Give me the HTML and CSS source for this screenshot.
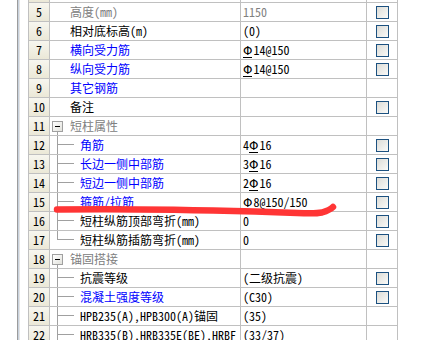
FILE: index.html
```html
<!DOCTYPE html>
<html lang="zh-CN">

<head>
    <meta charset="UTF-8">
    <title>短柱属性</title>
    <link rel="stylesheet" href="styles.css">
</head>

<body>
    <div class="sheet">
        <div class="gutter"></div>
        <div class="grid">
            <div class="row"><div class="num"></div><div class="name lv1"></div><div class="val"></div><div class="chk"><span class="box"></span></div></div>
            <div class="row"><div class="num">5</div><div class="name lv1 gray">高度(mm)</div><div class="val gray">1150</div><div class="chk"><span class="box"></span></div></div>
            <div class="row"><div class="num">6</div><div class="name lv1">相对底标高(m)</div><div class="val">(0)</div><div class="chk"><span class="box"></span></div></div>
            <div class="row"><div class="num">7</div><div class="name lv1 blue">横向受力筋</div><div class="val"><span class="rb">Φ</span>14@150</div><div class="chk"><span class="box"></span></div></div>
            <div class="row"><div class="num">8</div><div class="name lv1 blue">纵向受力筋</div><div class="val"><span class="rb">Φ</span>14@150</div><div class="chk"><span class="box"></span></div></div>
            <div class="row"><div class="num">9</div><div class="name lv1 blue">其它钢筋</div><div class="val"></div><div class="chk"></div></div>
            <div class="row"><div class="num">10</div><div class="name lv1">备注</div><div class="val"></div><div class="chk"><span class="box"></span></div></div>
            <div class="row"><div class="num">11</div><div class="name group gray"><span class="exp"></span>短柱属性</div><div class="val"></div><div class="chk"></div></div>
            <div class="row"><div class="num">12</div><div class="name child blue">角筋</div><div class="val">4<span class="rb">Φ</span>16</div><div class="chk"><span class="box"></span></div></div>
            <div class="row"><div class="num">13</div><div class="name child blue">长边一侧中部筋</div><div class="val">3<span class="rb">Φ</span>16</div><div class="chk"><span class="box"></span></div></div>
            <div class="row"><div class="num">14</div><div class="name child blue">短边一侧中部筋</div><div class="val">2<span class="rb">Φ</span>16</div><div class="chk"><span class="box"></span></div></div>
            <div class="row"><div class="num">15</div><div class="name child blue">箍筋/拉筋</div><div class="val"><span class="rb">Φ</span>8@150/150</div><div class="chk"><span class="box"></span></div></div>
            <div class="row"><div class="num">16</div><div class="name child">短柱纵筋顶部弯折(mm)</div><div class="val">0</div><div class="chk"><span class="box"></span></div></div>
            <div class="row"><div class="num">17</div><div class="name child last">短柱纵筋插筋弯折(mm)</div><div class="val">0</div><div class="chk"><span class="box"></span></div></div>
            <div class="row"><div class="num">18</div><div class="name group gray"><span class="exp"></span>锚固搭接</div><div class="val"></div><div class="chk"></div></div>
            <div class="row"><div class="num">19</div><div class="name child">抗震等级</div><div class="val">(二级抗震)</div><div class="chk"><span class="box"></span></div></div>
            <div class="row"><div class="num">20</div><div class="name child blue">混凝土强度等级</div><div class="val">(C30)</div><div class="chk"><span class="box"></span></div></div>
            <div class="row"><div class="num">21</div><div class="name child">HPB235(A),HPB300(A)锚固</div><div class="val">(35)</div><div class="chk"></div></div>
            <div class="row"><div class="num">22</div><div class="name child">HRB335(B),HRB335E(BE),HRBF</div><div class="val">(33/37)</div><div class="chk"></div></div>
        </div>
    </div>

    <!-- red pen mark over row 15 -->
    <svg class="mark" width="421" height="340" viewBox="0 0 421 340">
        <path d="M57 209.5 C 120 208.5, 200 210, 255 211.5 S 312 214.5, 322 212.5 Q 330 210, 333 207" />
    </svg>
</body>

</html>
```

FILE: styles.css
```css
body {
    margin: 0;
    background: #fff;
    color: #000;
    font-family: "Noto Sans Mono CJK SC", "Noto Sans CJK SC", sans-serif;
    font-size: 12px;
    overflow: hidden;
}

.sheet {
    display: flex;
    height: 340px;
    overflow: hidden;
}

.gutter {
    width: 29px;
    flex: none;
    background: linear-gradient(to right, #fff 0 17px, #9c9c9c 17px 18px, #c8d2de 18px 19px, #e4e4e4 19px 20px, #fff 20px 28px, #c0c0c0 28px 29px);
}

.grid {
    margin-top: -16px;
}

.row {
    display: grid;
    grid-template-columns: 21px 191px 126px 31px;
    height: 19px;
}

.row > div {
    box-sizing: border-box;
    border-right: 1px solid #c0c0c0;
    border-bottom: 1px solid #c0c0c0;
    line-height: 18px;
    white-space: nowrap;
    overflow: hidden;
}

.num {
    text-align: center;
    background: linear-gradient(#f7f6ef, #ebe8d7);
}

.name {
    position: relative;
}

.lv1,
.group {
    padding-left: 20px;
}

.child {
    padding-left: 30px;
}

.val {
    padding-left: 2px;
}

.gray {
    color: #808080;
}

.blue {
    color: #0000ff;
}

/* tree lines */
.child::before {
    content: "";
    position: absolute;
    left: 7px;
    top: 0;
    bottom: 0;
    border-left: 1px solid #a0a0a0;
}

.child.last::before {
    bottom: 9px;
}

.child::after {
    content: "";
    position: absolute;
    left: 8px;
    top: 8px;
    width: 16px;
    border-top: 1px solid #a0a0a0;
}

.group::after {
    content: "";
    position: absolute;
    left: 7px;
    top: 15px;
    bottom: 0;
    border-left: 1px solid #a0a0a0;
}

.exp {
    position: absolute;
    left: 2px;
    top: 4px;
    width: 9px;
    height: 9px;
    border: 1px solid #a0a0a0;
    background: linear-gradient(135deg, #fff, #e2e2dc);
}

.exp::before {
    content: "";
    position: absolute;
    left: 2px;
    top: 4px;
    width: 5px;
    border-top: 1px solid #000;
}

.chk {
    padding: 3px 0 0 9px;
}

.box {
    display: block;
    box-sizing: border-box;
    width: 13px;
    height: 13px;
    border: 1px solid #1c5180;
    background: linear-gradient(135deg, #dcdcd7, #fafaf8);
}

.rb {
    display: inline-block;
    font-family: "DejaVu Sans", sans-serif;
    font-size: 12px;
    line-height: 11px;
    border-bottom: 1px solid #000;
    margin-right: 1px;
}

.mark {
    position: absolute;
    left: 0;
    top: 0;
    pointer-events: none;
}

.mark path {
    fill: none;
    stroke: #ff3535;
    stroke-width: 6.5;
    stroke-linecap: round;
    stroke-linejoin: round;
}
```
